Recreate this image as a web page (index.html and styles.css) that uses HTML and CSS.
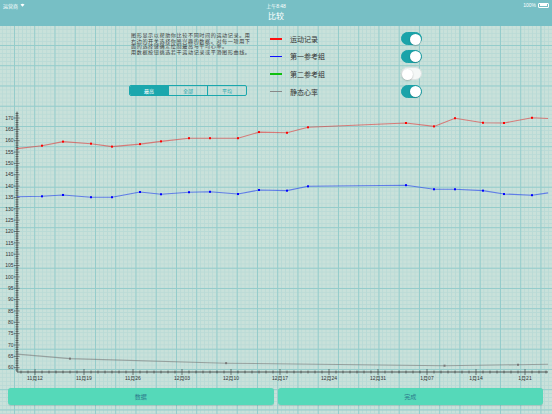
FILE: index.html
```html
<!DOCTYPE html>
<html>
    <head>
        <meta charset="UTF-8">
        <title>比较</title>
        <link rel="stylesheet" href="styles.css">
    </head>

    <body>
        <header class="topbar">
            <div class="status">
                <span class="carrier">运营商
                    <svg class="wifi" viewBox="0 0 10 8"><path d="M5 7.5 L1 3.2 A6 6 0 0 1 9 3.2 Z" fill="#fff"/></svg>
                </span>
                <span class="clock">上午8:48</span>
                <span class="power">100%
                    <span class="battery"><span class="battery-level"></span></span>
                </span>
            </div>
            <h1 class="title">比较</h1>
        </header>

        <main class="paper">
            <section class="controls">
                <div class="intro">
                    <p class="intro-text">图形显示以帮助你比较不同时间的运动记录。用右边的开关选择你感兴趣的数据。对每一项用下面的选择键确定绘制最高与平均心率。<br>用数据按钮挑选若干运动记录或平滑图形曲线。</p>
                    <div class="segmented">
                        <button class="seg active" type="button">最高</button>
                        <button class="seg" type="button">全部</button>
                        <button class="seg" type="button">平均</button>
                    </div>
                </div>
                <ul class="legend">
                    <li class="legend-row"><span class="swatch red"></span><span class="legend-name">运动记录</span><span class="switch on"></span></li>
                    <li class="legend-row"><span class="swatch blue"></span><span class="legend-name">第一参考组</span><span class="switch on"></span></li>
                    <li class="legend-row"><span class="swatch green"></span><span class="legend-name">第二参考组</span><span class="switch"></span></li>
                    <li class="legend-row"><span class="swatch gray"></span><span class="legend-name">静态心率</span><span class="switch on"></span></li>
                </ul>
            </section>

            <svg id="chart" class="chart" width="552" height="280" viewBox="0 0 552 280"></svg>

            <div class="actions">
                <button class="action" type="button">数据</button>
                <button class="action" type="button">完成</button>
            </div>
        </main>

        <script>
            const svgNS = "http://www.w3.org/2000/svg";
            const chart = document.getElementById("chart");

            // day 0 = 11月12
            const start = new Date(2015, 10, 12);
            const axisX = 17;
            const axisY = 268;
            const rightEdge = 548;

            function px(day) { return 35 + day * 7; }
            function py(value) { return 14 + (170 - value) * 2.27; }

            const series = [
                { color: "#ff0000", line: "rgba(230,40,40,0.55)", points: [
                    [-2.57,156.5],[1,157.8],[4,159.6],[8,158.7],[11,157.4],[15,158.5],[18,159.7],
                    [22,161.1],[25,161.1],[29,161.1],[32,163.8],[36,163.5],[39,165.9],[53,167.8],
                    [57,166.3],[60,169.9],[64,167.9],[67,167.8],[71,170.1],[73.3,169.8]] },
                { color: "#0000ff", line: "rgba(30,60,240,0.6)", points: [
                    [-2.57,135.3],[1,135.5],[4,136.1],[8,135.1],[11,135.1],[15,137.4],[18,136.4],
                    [22,137.3],[25,137.5],[29,136.5],[32,138.3],[36,138.0],[39,139.9],[53,140.4],
                    [57,138.6],[60,138.6],[64,138.0],[67,136.5],[71,136.0],[73.3,137.0]] },
                { color: "#777777", line: "rgba(120,120,120,0.6)", points: [
                    [-2.57,66.0],[5,64.0],[27.3,62.0],[58.5,60.9],[69,61.3],[73.3,61.5]] }
            ];

            function add(tag, attrs, text) {
                const el = document.createElementNS(svgNS, tag);
                for (const k in attrs) el.setAttribute(k, attrs[k]);
                if (text) el.textContent = text;
                chart.appendChild(el);
                return el;
            }

            function drawAxes() {
                add("line", { x1: axisX, y1: py(172.8), x2: axisX, y2: axisY, class: "axis" });
                add("line", { x1: axisX, y1: axisY, x2: rightEdge, y2: axisY, class: "axis" });

                for (let v = 59; v <= 172; v++) {
                    const y = py(v);
                    const big = v % 5 === 0;
                    add("line", { x1: big ? 14 : 15.5, y1: y, x2: big ? 19.5 : 18.5, y2: y, class: "tick" });
                    if (big) add("text", { x: 13.5, y: y + 1.7, class: "ylabel" }, String(v));
                }

                for (let d = -2; d <= 73; d++) {
                    const x = px(d);
                    const big = d % 7 === 0;
                    add("line", { x1: x, y1: big ? 265 : 266.5, x2: x, y2: big ? 271 : 269.5, class: "tick" });
                    if (big) {
                        const date = new Date(start.getTime() + d * 86400000);
                        const label = (date.getMonth() + 1) + "月" + String(date.getDate()).padStart(2, "0");
                        add("text", { x: x, y: 276, class: "xlabel" }, label);
                    }
                }
            }

            function drawSeries(s) {
                const pts = s.points.map(p => px(p[0]).toFixed(1) + "," + py(p[1]).toFixed(1)).join(" ");
                add("polyline", { points: pts, fill: "none", stroke: s.line, "stroke-width": 1.1 });
                s.points.slice(1, -1).forEach(p => {
                    add("rect", { x: px(p[0]) - 1, y: py(p[1]) - 1, width: 2, height: 2, fill: s.color });
                });
            }

            drawAxes();
            series.forEach(drawSeries);
        </script>
    </body>
</html>
```

FILE: styles.css
```css
* {
    margin: 0;
    padding: 0;
    box-sizing: border-box;
}
body {
    width: 552px;
    height: 414px;
    overflow: hidden;
    display: flex;
    flex-direction: column;
    font-family: "Liberation Sans", "Noto Sans CJK SC", sans-serif;
    color: #333;
}
.topbar {
    background-color: #77bfc5;
    color: white;
    height: 26px;
    flex-shrink: 0;
}
.status {
    display: flex;
    justify-content: space-between;
    align-items: center;
    height: 10px;
    padding: 0 3px;
    font-size: 5px;
}
.carrier, .power {
    display: flex;
    align-items: center;
    gap: 2px;
    width: 60px;
}
.power {
    justify-content: flex-end;
}
.wifi {
    width: 5px;
    height: 4px;
}
.battery {
    width: 11px;
    height: 5px;
    border: 0.6px solid white;
    border-radius: 1px;
    padding: 0.6px;
}
.battery-level {
    display: block;
    height: 100%;
    background-color: white;
}
.title {
    text-align: center;
    font-size: 8px;
    font-weight: normal;
    line-height: 13px;
}
.paper {
    flex: 1;
    display: flex;
    flex-direction: column;
    background-color: #c9e1da;
    background-image:
        linear-gradient(90deg, #94cccb 1px, transparent 1px),
        linear-gradient(#94cccb 1px, transparent 1px),
        linear-gradient(90deg, #b9dad6 1px, transparent 1px),
        linear-gradient(#b9dad6 1px, transparent 1px);
    background-size: 20.25px 20.25px, 20.25px 20.25px, 4.05px 4.05px, 4.05px 4.05px;
    background-position: 14px 19px;
}
.controls {
    display: flex;
    gap: 17px;
    height: 78px;
    padding-left: 129px;
}
.intro {
    width: 124px;
    padding-top: 6px;
}
.intro-text {
    width: 244px;
    height: 46px;
    margin-bottom: -23px;
    margin-left: 2px;
    font-size: 10.2px;
    letter-spacing: 1.2px;
    line-height: 11.5px;
    color: #3a3a3a;
    transform: scale(0.5);
    transform-origin: 0 0;
}
.segmented {
    display: flex;
    width: 118px;
    height: 11px;
    margin-top: 30px;
    border: 1px solid #1ba7ad;
    border-radius: 2px;
    overflow: hidden;
}
.seg {
    flex: 1;
    border: 0;
    border-left: 1px solid #1ba7ad;
    background: transparent;
    color: #1ba7ad;
    font: inherit;
    font-size: 5px;
}
.seg:first-child {
    border-left: 0;
}
.seg.active {
    background-color: #1ba7ad;
    color: white;
}
.legend {
    list-style: none;
    width: 152px;
    padding-top: 4px;
}
.legend-row {
    display: flex;
    align-items: center;
    height: 17.6px;
    font-size: 7px;
    color: #333;
}
.swatch {
    width: 12px;
    height: 1.5px;
    margin-right: 8px;
}
.red { background-color: #ff1010; }
.blue { background-color: #1010ff; }
.green { background-color: #10c010; }
.gray { background-color: #888; }
.legend-name {
    flex: 1;
}
.switch {
    position: relative;
    width: 21px;
    height: 13px;
    border-radius: 7px;
    background-color: #f4f7f6;
    border: 0.6px solid #dde3e2;
}
.switch::after {
    content: "";
    position: absolute;
    top: 0.4px;
    left: 0.4px;
    width: 11px;
    height: 11px;
    border-radius: 50%;
    background-color: white;
    box-shadow: 0 0.5px 1.5px rgba(0, 0, 0, 0.3);
}
.switch.on {
    background-color: #1ba3a9;
    border-color: #1ba3a9;
}
.switch.on::after {
    left: auto;
    right: 0.4px;
}
.chart {
    display: block;
    flex-shrink: 0;
}
.axis {
    stroke: #333;
    stroke-width: 0.8;
}
.tick {
    stroke: #333;
    stroke-width: 0.6;
}
.ylabel {
    font-size: 5px;
    fill: #333;
    text-anchor: end;
}
.xlabel {
    font-size: 5px;
    fill: #333;
    text-anchor: middle;
    font-family: "Liberation Sans", "Noto Sans CJK SC", sans-serif;
}
.actions {
    display: flex;
    gap: 4px;
    padding: 4px 9px 0 8px;
}
.action {
    flex: 1;
    height: 17px;
    border: 0;
    border-radius: 3px;
    background-color: #55d9b9;
    color: #2d7b8c;
    font: inherit;
    font-size: 6px;
    box-shadow: 0 0.5px 1px rgba(0, 0, 0, 0.1);
}
```
